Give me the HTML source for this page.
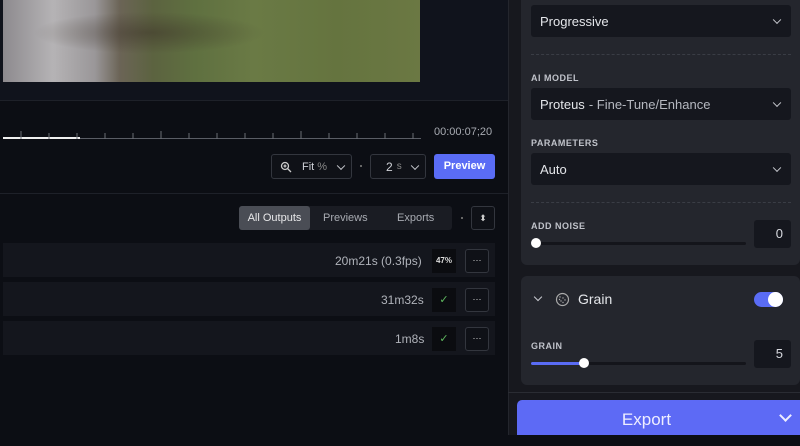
<!DOCTYPE html>
<html><head><meta charset="utf-8"><style>
*{box-sizing:border-box;margin:0;padding:0}
body{width:800px;height:446px;overflow:hidden;background:#0c0e14;font-family:"Liberation Sans",sans-serif;position:relative;color:#d8dae0}
.abs{position:absolute}
.img{left:3px;top:0;width:417px;height:82px;background:radial-gradient(ellipse at 35% 40%,rgba(60,50,40,.5),transparent 30%),linear-gradient(90deg,#8d8a8e 0%,#b5b3b5 12%,#9a9799 22%,#6b6456 28%,#5c6340 36%,#5f7040 46%,#6a7a45 60%,#65743f 80%,#6b7843 100%)}
.sel{background:#15171e;border-radius:3px;font-size:13px;color:#e4e6ea;display:flex;align-items:center;padding-left:9px}
.chev{position:absolute;right:11px;top:50%;width:6px;height:6px;border-right:1.5px solid #c8cad0;border-bottom:1.5px solid #c8cad0;transform:translateY(-70%) rotate(45deg)}
.lbl{font-size:9px;font-weight:bold;letter-spacing:.5px;color:#c0c3ca}
.row{left:3px;width:492px;height:34px;background:#14161d;font-size:12px;color:#b8bbc2}
.btn{border:1px solid #33363e;border-radius:3px;background:#0f1117}
.dash{left:531px;width:260px;border-top:1px dashed #3a3d45}
</style></head><body>
<div class="abs" style="left:0;top:0;width:508px;height:100px;background:#10131c"></div>
<div class="abs img"></div>
<div class="abs" style="left:0;top:100px;width:508px;height:1px;background:#1e2129"></div>
<div class="abs" style="left:3px;top:138px;width:418px;height:1px;background:#5a5d65"></div>
<div class="abs" style="left:3px;top:137px;width:77px;height:2px;background:#f0f0f0"></div>
<svg class="abs" style="left:0;top:128px" width="430" height="12"><g stroke="#6a6d75" stroke-width="1">
<path d="M21 3v8M49 5v6M77 5v6M105 5v6M133 5v6M161 3v8M189 5v6M217 5v6M245 5v6M273 5v6M301 3v8M329 5v6M357 5v6M385 5v6M413 5v6"/></g></svg>
<div class="abs" style="left:434px;top:126px;font-size:11px;color:#a8abb2">00:00:07;20</div>
<div class="abs btn" style="left:271px;top:154px;width:81px;height:25px;font-size:11px;color:#d0d2d8;display:flex;align-items:center;padding-left:8px">
<svg width="12" height="12"><circle cx="5" cy="5" r="3.5" fill="none" stroke="#ccc" stroke-width="1.3"/><path d="M7.5 7.5L11 11M3.5 5h3M5 3.5v3" stroke="#ccc" stroke-width="1.3"/></svg>
<span style="margin-left:10px">Fit <span style="color:#888">%</span></span><span class="chev" style="right:7px;width:6px;height:6px"></span></div>
<div class="abs" style="left:360px;top:165px;width:2px;height:2px;background:#666"></div>
<div class="abs btn" style="left:370px;top:154px;width:56px;height:25px;font-size:12px;color:#d0d2d8;display:flex;align-items:center;padding-left:15px">2 <span style="color:#888;font-size:10px;margin-left:4px">s</span><span class="chev" style="right:7px;width:6px;height:6px"></span></div>
<div class="abs" style="left:434px;top:154px;width:61px;height:25px;background:#5a6cf5;border-radius:3px;font-size:11px;font-weight:bold;color:#fff;text-align:center;line-height:25px">Preview</div>
<div class="abs" style="left:0;top:193px;width:508px;height:1px;background:#1e2129"></div>
<div class="abs" style="left:239px;top:206px;width:213px;height:24px;background:#1a1c23;border-radius:3px"></div>
<div class="abs" style="left:239px;top:206px;width:71px;height:24px;background:#4a4d55;border-radius:3px;font-size:11px;color:#e8e8ea;text-align:center;line-height:24px">All Outputs</div>
<div class="abs" style="left:323px;top:212px;font-size:11px;color:#a8abb2">Previews</div>
<div class="abs" style="left:397px;top:212px;font-size:11px;color:#a8abb2">Exports</div>
<div class="abs" style="left:461px;top:217px;width:2px;height:2px;background:#666"></div>
<div class="abs btn" style="left:471px;top:206px;width:24px;height:24px;text-align:center;color:#ccc;font-size:9px;line-height:22px">⬍</div>
<div class="abs row" style="top:243px"></div>
<div class="abs" style="left:335px;top:254px;font-size:12px;color:#b0b3ba">20m21s (0.3fps)</div>
<div class="abs" style="left:432px;top:249px;width:24px;height:24px;background:#0b0c10;font-size:8px;font-weight:bold;color:#ddd;text-align:center;line-height:24px">47%</div>
<div class="abs btn" style="left:465px;top:249px;width:24px;height:24px;text-align:center;color:#ddd;font-size:9px;line-height:20px">···</div>
<div class="abs row" style="top:282px"></div>
<div class="abs" style="left:381px;top:293px;font-size:12px;color:#b0b3ba">31m32s</div>
<div class="abs" style="left:432px;top:288px;width:24px;height:24px;background:#0b0c10;color:#5fb85f;font-size:11px;text-align:center;line-height:24px">✓</div>
<div class="abs btn" style="left:465px;top:288px;width:24px;height:24px;text-align:center;color:#ddd;font-size:9px;line-height:20px">···</div>
<div class="abs row" style="top:321px"></div>
<div class="abs" style="left:395px;top:332px;font-size:12px;color:#b0b3ba">1m8s</div>
<div class="abs" style="left:432px;top:327px;width:24px;height:24px;background:#0b0c10;color:#5fb85f;font-size:11px;text-align:center;line-height:24px">✓</div>
<div class="abs btn" style="left:465px;top:327px;width:24px;height:24px;text-align:center;color:#ddd;font-size:9px;line-height:20px">···</div>
<div class="abs" style="left:508px;top:0;width:292px;height:435px;background:#17181e;border-left:1px solid #24262d"></div>
<div class="abs" style="left:521px;top:-6px;width:279px;height:271px;background:#24262d;border-radius:6px"></div>
<div class="abs sel" style="left:531px;top:5px;width:260px;height:32px">Progressive<span class="chev"></span></div>
<div class="abs dash" style="top:54px"></div>
<div class="abs lbl" style="left:531px;top:73px">AI MODEL</div>
<div class="abs sel" style="left:531px;top:88px;width:260px;height:32px">Proteus <span style="color:#b5b8c0;margin-left:4px">- Fine-Tune/Enhance</span><span class="chev"></span></div>
<div class="abs lbl" style="left:531px;top:138px">PARAMETERS</div>
<div class="abs sel" style="left:531px;top:153px;width:260px;height:32px">Auto<span class="chev"></span></div>
<div class="abs dash" style="top:202px"></div>
<div class="abs lbl" style="left:531px;top:221px">ADD NOISE</div>
<div class="abs" style="left:531px;top:242px;width:215px;height:3px;background:#14151b;border-radius:2px"></div>
<div class="abs" style="left:531px;top:238px;width:10px;height:10px;background:#fff;border-radius:50%"></div>
<div class="abs" style="left:754px;top:220px;width:37px;height:28px;background:#15171e;border-radius:3px;font-size:13px;text-align:right;padding-right:8px;line-height:28px">0</div>
<div class="abs" style="left:521px;top:276px;width:279px;height:109px;background:#24262d;border-radius:6px"></div>
<div class="abs" style="left:535px;top:294px;width:6px;height:6px;border-right:1.5px solid #c8cad0;border-bottom:1.5px solid #c8cad0;transform:rotate(45deg)"></div>
<svg class="abs" style="left:555px;top:292px" width="15" height="15"><circle cx="7.5" cy="7.5" r="6" fill="none" stroke="#aaa" stroke-width="1.2"/><g fill="#aaa"><circle cx="5" cy="5" r=".7"/><circle cx="8" cy="6" r=".7"/><circle cx="10" cy="8" r=".7"/><circle cx="6" cy="9" r=".7"/><circle cx="8" cy="10.5" r=".7"/><circle cx="4.5" cy="7.5" r=".7"/></g></svg>
<div class="abs" style="left:578px;top:291px;font-size:14px;color:#e4e6ea">Grain</div>
<div class="abs" style="left:754px;top:292px;width:29px;height:15px;background:#5a6cf5;border-radius:8px"></div>
<div class="abs" style="left:768px;top:292px;width:15px;height:15px;background:#fff;border-radius:50%"></div>
<div class="abs lbl" style="left:531px;top:341px">GRAIN</div>
<div class="abs" style="left:531px;top:362px;width:215px;height:3px;background:#14151b;border-radius:2px"></div>
<div class="abs" style="left:531px;top:362px;width:53px;height:3px;background:#5a6cf5;border-radius:2px"></div>
<div class="abs" style="left:579px;top:358px;width:10px;height:10px;background:#fff;border-radius:50%"></div>
<div class="abs" style="left:754px;top:340px;width:37px;height:28px;background:#15171e;border-radius:3px;font-size:13px;text-align:right;padding-right:8px;line-height:28px">5</div>
<div class="abs" style="left:508px;top:392px;width:292px;height:1px;background:#2a2c33"></div>
<div class="abs" style="left:517px;top:400px;width:283px;height:35px;background:#5d6af5;border-radius:5px 0 0 0;font-size:17px;color:#eef;text-align:center;line-height:40px;padding-right:24px">Export</div>
<div class="abs" style="left:781px;top:411px;width:9px;height:9px;border-right:2px solid #eef;border-bottom:2px solid #eef;transform:rotate(45deg)"></div>
<div class="abs" style="left:0;top:435px;width:800px;height:11px;background:#0c0e14"></div>
</body></html>
